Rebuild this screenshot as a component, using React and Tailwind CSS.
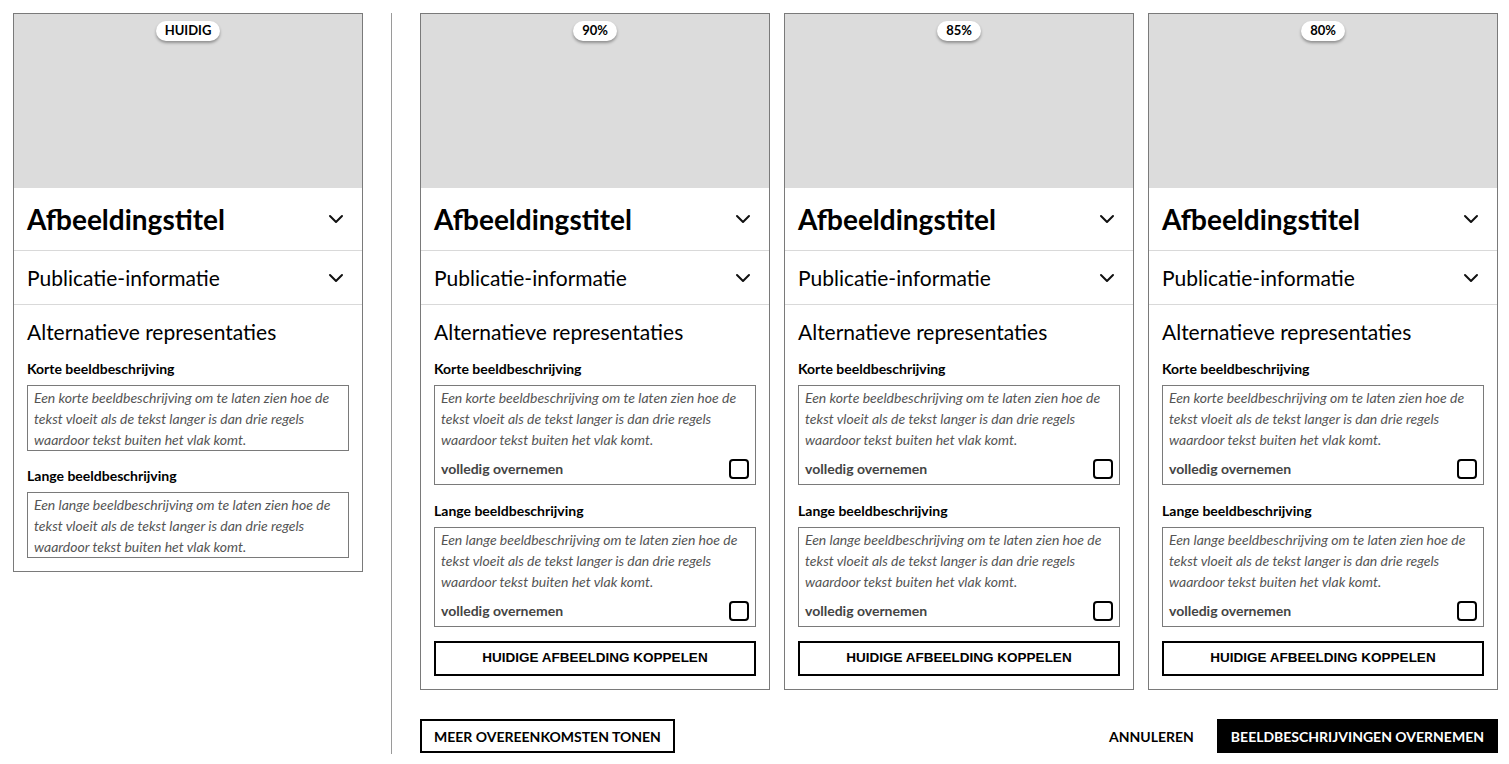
import React from 'react';

const font = { fontFamily: 'Lato, "Noto Sans", sans-serif' };

const Chevron = () => (
    <svg width="16" height="10" viewBox="0 0 16 10" fill="none" className="shrink-0">
        <polyline points="2,2 8,8 14,2" stroke="#111" strokeWidth="2" strokeLinecap="round" strokeLinejoin="round" />
    </svg>
);

const DescBox = ({ text, withCheck }) => (
    <div className="border border-[#7a7a7a] px-[6px] pt-px">
        <p className="text-[14px] leading-[21px] italic text-[#555]">{text}</p>
        {withCheck && (
            <div className="flex items-center justify-between pt-[9px] pb-[5px]">
                <span className="text-[14px] leading-[20px] font-bold text-[#444]">volledig overnemen</span>
                <span className="w-[20px] h-[20px] border-2 border-black rounded-[4px]"></span>
            </div>
        )}
    </div>
);

const Card = ({ badge, match }) => (
    <div className="w-[350px] border border-[#7a7a7a] bg-white flex flex-col">
        <div className="h-[174px] bg-[#dcdcdc] flex justify-center pt-[7px]">
            <span className="h-[20px] px-[9px] rounded-full bg-white text-[13px] font-bold text-black flex items-center shadow-[0_2px_3px_rgba(0,0,0,0.35)]">
                {badge}
            </span>
        </div>
        <div className="h-[63px] flex items-center justify-between pl-[13px] pr-[18px] border-b border-[#d9d9d9]">
            <h2 className="text-[28px] font-bold text-black">Afbeeldingstitel</h2>
            <Chevron />
        </div>
        <div className="h-[54px] flex items-center justify-between pl-[13px] pr-[18px] border-b border-[#d9d9d9]">
            <h3 className="text-[21px] text-black">Publicatie-informatie</h3>
            <Chevron />
        </div>
        <div className="px-[13px] pt-[13px] pb-[13px] flex flex-col">
            <h3 className="text-[21px] leading-[28px] text-black">Alternatieve representaties</h3>
            <div className="text-[14px] font-bold text-black mt-[14px] mb-[7px] leading-[18px]">Korte beeldbeschrijving</div>
            <DescBox withCheck={match} text="Een korte beeldbeschrijving om te laten zien hoe de tekst vloeit als de tekst langer is dan drie regels waardoor tekst buiten het vlak komt." />
            <div className={`text-[14px] font-bold text-black mb-[7px] leading-[18px] ${match ? 'mt-[17px]' : 'mt-[16px]'}`}>Lange beeldbeschrijving</div>
            <DescBox withCheck={match} text="Een lange beeldbeschrijving om te laten zien hoe de tekst vloeit als de tekst langer is dan drie regels waardoor tekst buiten het vlak komt." />
            {match && (
                <button className="mt-[14px] h-[35px] border-2 border-black text-[13.5px] font-bold text-black" style={{ fontFamily: '"Liberation Sans", Arial, sans-serif' }}>
                    HUIDIGE AFBEELDING KOPPELEN
                </button>
            )}
        </div>
    </div>
);

export default function App() {
    return (
        <div className="w-[1509px] h-[764px] bg-white pl-[13px] pt-[13px] flex items-start" style={font}>
            <Card badge="HUIDIG" />
            <div className="ml-[28px] w-px self-stretch mb-[10px] bg-[#9a9a9a]"></div>
            <div className="ml-[28px] flex flex-col">
                <div className="flex gap-[14px]">
                    <Card badge="90%" match />
                    <Card badge="85%" match />
                    <Card badge="80%" match />
                </div>
                <div className="mt-[29px] flex items-center justify-between">
                    <button className="h-[34px] px-[12px] border-2 border-black text-[14px] font-bold text-black">
                        MEER OVEREENKOMSTEN TONEN
                    </button>
                    <div className="flex items-center gap-[23px]">
                        <button className="text-[14px] font-bold text-black">ANNULEREN</button>
                        <button className="h-[34px] px-[14px] bg-black text-white text-[14px] font-bold">
                            BEELDBESCHRIJVINGEN OVERNEMEN
                        </button>
                    </div>
                </div>
            </div>
        </div>
    );
}
